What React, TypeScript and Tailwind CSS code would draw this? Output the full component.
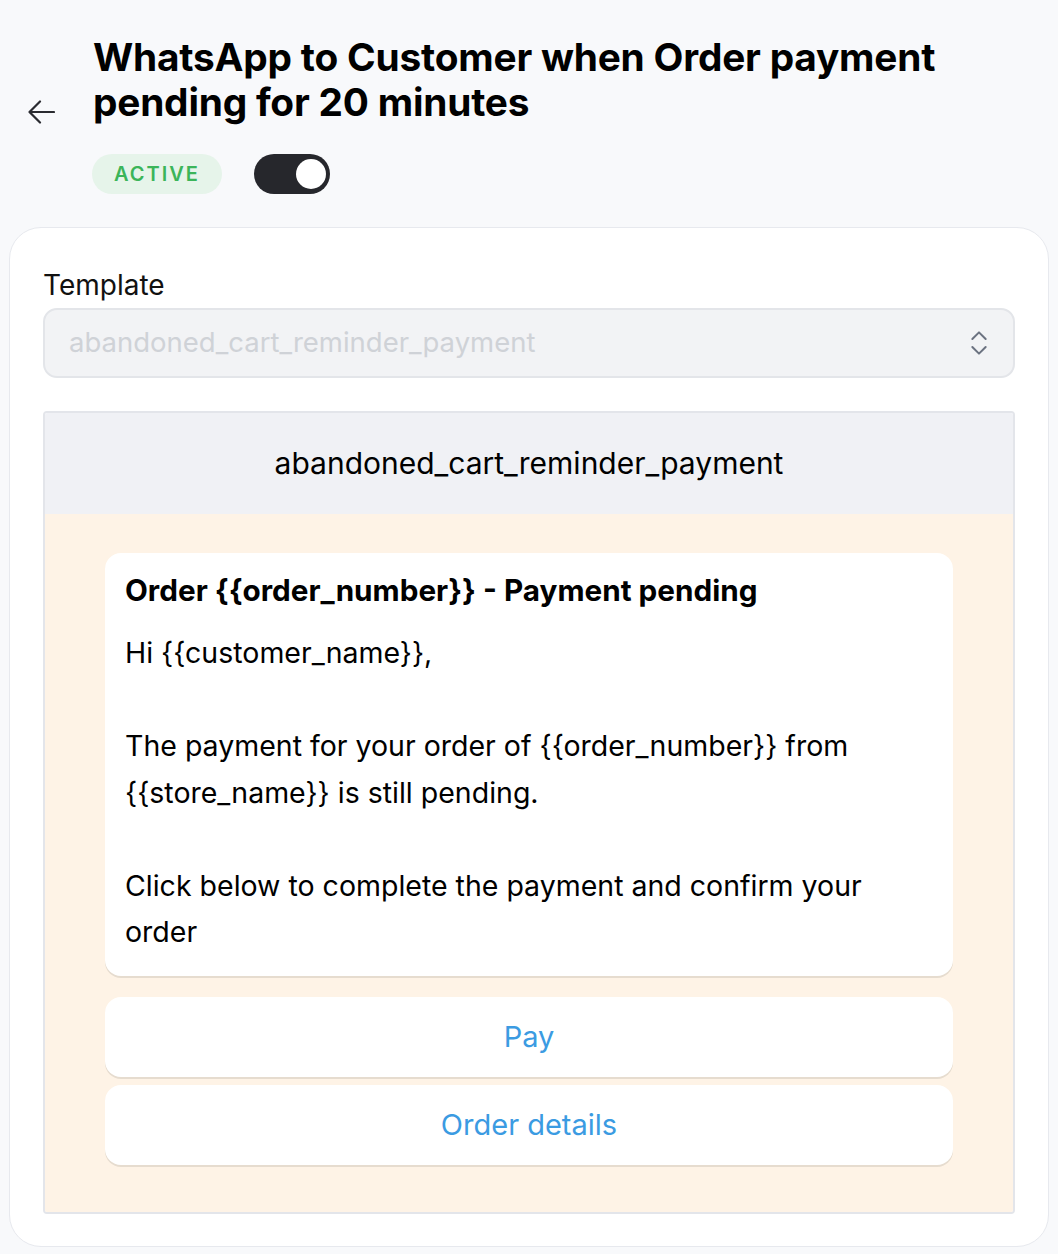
import { ChevronsUpDown } from "lucide-react";

const font = { fontFamily: "Inter, 'Noto Sans', sans-serif" };

function BackArrow() {
  return (
    <svg width="28" height="24" viewBox="0 0 28 24" fill="none" className="mt-[66px] shrink-0 text-[#2a2b30]">
      <path d="M13 1.5 L2.5 12 L13 22.5 M2.5 12 H27" stroke="currentColor" strokeWidth="2.2" strokeLinecap="round" strokeLinejoin="round" />
    </svg>
  );
}

function Toggle() {
  return (
    <div className="flex h-[40px] w-[76px] items-center justify-end rounded-full bg-[#26272c] px-[4px]">
      <div className="h-[30px] w-[30px] rounded-full bg-white" />
    </div>
  );
}

function ButtonRow({ label }: { label: string }) {
  return (
    <div className="flex h-[80px] items-center justify-center rounded-[16px] bg-white text-[29px] text-[#3b9be2] shadow-[0_2px_0_#e6dccf]">
      {label}
    </div>
  );
}

export default function App() {
  return (
    <div className="min-h-[1254px] bg-[#f8f9fb] pb-[8px]" style={font}>
      <div className="flex items-start pl-[27px] pt-[34px]">
        <BackArrow />
        <h1 className="ml-[38px] text-[38.8px] font-bold leading-[45px] tracking-[-0.2px] text-black">
          WhatsApp to Customer when Order payment
          <br />
          pending for 20 minutes
        </h1>
      </div>

      <div className="mt-[30px] flex items-center gap-[32px] pl-[92px]">
        <span className="flex h-[40px] w-[130px] items-center justify-center rounded-full bg-[#e6f4ea] text-[20px] font-semibold tracking-[2px] text-[#3bb55a]">
          ACTIVE
        </span>
        <Toggle />
      </div>

      <div className="mx-[9px] mt-[33px] rounded-[32px] border border-[#e7e9ee] bg-white px-[33px] pb-[32px] pt-[40px]">
        <div className="text-[28px] leading-[34px] text-[#111]">Template</div>
        <div className="mt-[6px] flex h-[70px] items-center justify-between rounded-[14px] border-2 border-[#e3e5e9] bg-[#f2f3f5] pl-[24px] pr-[18px]">
          <span className="text-[27.5px] text-[#cfd2d7]">abandoned_cart_reminder_payment</span>
          <ChevronsUpDown className="h-[32px] w-[32px] text-[#6b7280]" strokeWidth={1.5} />
        </div>

        <div className="mt-[33px] overflow-hidden rounded-[4px] border-2 border-[#e3e5ea]">
          <div className="flex h-[101px] items-center justify-center bg-[#f0f1f5] text-[30px] text-black">
            abandoned_cart_reminder_payment
          </div>
          <div className="flex flex-col gap-[8px] bg-[#fef3e6] px-[60px] pb-[47px] pt-[39px]">
            <div className="mb-[13px] rounded-[16px] bg-white px-[20px] pb-[20px] pt-[17px] text-[28.5px] leading-[46.5px] text-black shadow-[0_2px_0_#e6dccf]">
              <div className="text-[29.7px] font-bold leading-[40px]">Order {"{{order_number}}"} - Payment pending</div>
              <div className="mt-[20px]">Hi {"{{customer_name}}"},</div>
              <div className="h-[46.5px]" />
              <div>
                The payment for your order of {"{{order_number}}"} from
                <br />
                {"{{store_name}}"} is still pending.
              </div>
              <div className="h-[46.5px]" />
              <div>
                Click below to complete the payment and confirm your
                <br />
                order
              </div>
            </div>
            <ButtonRow label="Pay" />
            <ButtonRow label="Order details" />
          </div>
        </div>
      </div>
    </div>
  );
}
